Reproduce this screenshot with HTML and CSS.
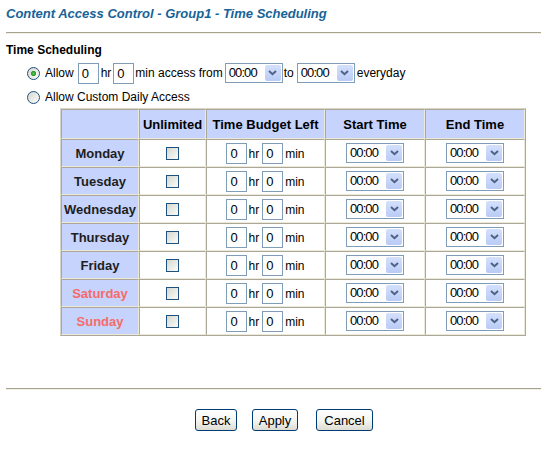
FILE: index.html
```html
<!DOCTYPE html>
<html>
<head>
<meta charset="utf-8">
<title>Time Scheduling</title>
<link rel="stylesheet" href="styles.css">
</head>
<body>
<div class="page">
  <h1 class="title">Content Access Control - Group1 - Time Scheduling</h1>
  <div class="rule"></div>
  <div class="section">Time Scheduling</div>

  <div class="opt opt1">
    <input type="radio" class="radio" name="mode" checked>
    <span class="t-allow">Allow</span>
    <input class="num n1" value="0"><span class="u-hr">hr</span><input class="num n2" value="0"><span class="t-from">min access from</span>
    <span class="sel s1"><span class="val">00:00</span><span class="arr"><svg width="9" height="6" viewBox="0 0 9 6"><path d="M1 1 L4.5 4.3 L8 1" fill="none" stroke="#4d6185" stroke-width="1.9"/></svg></span></span>
    <span class="t-to">to</span>
    <span class="sel s2"><span class="val">00:00</span><span class="arr"><svg width="9" height="6" viewBox="0 0 9 6"><path d="M1 1 L4.5 4.3 L8 1" fill="none" stroke="#4d6185" stroke-width="1.9"/></svg></span></span>
    <span class="t-every">everyday</span>
  </div>

  <div class="opt opt2">
    <input type="radio" class="radio" name="mode">
    <span class="t-allow">Allow Custom Daily Access</span>
  </div>

  <table class="grid">
    <thead>
      <tr class="head">
        <th class="c1"></th>
        <th class="c2">Unlimited</th>
        <th class="c3">Time Budget Left</th>
        <th class="c4">Start Time</th>
        <th class="c5">End Time</th>
      </tr>
    </thead>
    <tbody>
      <tr><th class="day">Monday</th><td><input type="checkbox" class="chk"></td><td><span class="budget"><input class="num" value="0"><span class="b-hr">hr</span><input class="num" value="0"><span class="b-min">min</span></span></td><td><span class="sel"><span class="val">00:00</span><span class="arr"><svg width="9" height="6" viewBox="0 0 9 6"><path d="M1 1 L4.5 4.3 L8 1" fill="none" stroke="#4d6185" stroke-width="1.9"/></svg></span></span></td><td><span class="sel"><span class="val">00:00</span><span class="arr"><svg width="9" height="6" viewBox="0 0 9 6"><path d="M1 1 L4.5 4.3 L8 1" fill="none" stroke="#4d6185" stroke-width="1.9"/></svg></span></span></td></tr>
      <tr><th class="day">Tuesday</th><td><input type="checkbox" class="chk"></td><td><span class="budget"><input class="num" value="0"><span class="b-hr">hr</span><input class="num" value="0"><span class="b-min">min</span></span></td><td><span class="sel"><span class="val">00:00</span><span class="arr"><svg width="9" height="6" viewBox="0 0 9 6"><path d="M1 1 L4.5 4.3 L8 1" fill="none" stroke="#4d6185" stroke-width="1.9"/></svg></span></span></td><td><span class="sel"><span class="val">00:00</span><span class="arr"><svg width="9" height="6" viewBox="0 0 9 6"><path d="M1 1 L4.5 4.3 L8 1" fill="none" stroke="#4d6185" stroke-width="1.9"/></svg></span></span></td></tr>
      <tr><th class="day">Wednesday</th><td><input type="checkbox" class="chk"></td><td><span class="budget"><input class="num" value="0"><span class="b-hr">hr</span><input class="num" value="0"><span class="b-min">min</span></span></td><td><span class="sel"><span class="val">00:00</span><span class="arr"><svg width="9" height="6" viewBox="0 0 9 6"><path d="M1 1 L4.5 4.3 L8 1" fill="none" stroke="#4d6185" stroke-width="1.9"/></svg></span></span></td><td><span class="sel"><span class="val">00:00</span><span class="arr"><svg width="9" height="6" viewBox="0 0 9 6"><path d="M1 1 L4.5 4.3 L8 1" fill="none" stroke="#4d6185" stroke-width="1.9"/></svg></span></span></td></tr>
      <tr><th class="day">Thursday</th><td><input type="checkbox" class="chk"></td><td><span class="budget"><input class="num" value="0"><span class="b-hr">hr</span><input class="num" value="0"><span class="b-min">min</span></span></td><td><span class="sel"><span class="val">00:00</span><span class="arr"><svg width="9" height="6" viewBox="0 0 9 6"><path d="M1 1 L4.5 4.3 L8 1" fill="none" stroke="#4d6185" stroke-width="1.9"/></svg></span></span></td><td><span class="sel"><span class="val">00:00</span><span class="arr"><svg width="9" height="6" viewBox="0 0 9 6"><path d="M1 1 L4.5 4.3 L8 1" fill="none" stroke="#4d6185" stroke-width="1.9"/></svg></span></span></td></tr>
      <tr><th class="day">Friday</th><td><input type="checkbox" class="chk"></td><td><span class="budget"><input class="num" value="0"><span class="b-hr">hr</span><input class="num" value="0"><span class="b-min">min</span></span></td><td><span class="sel"><span class="val">00:00</span><span class="arr"><svg width="9" height="6" viewBox="0 0 9 6"><path d="M1 1 L4.5 4.3 L8 1" fill="none" stroke="#4d6185" stroke-width="1.9"/></svg></span></span></td><td><span class="sel"><span class="val">00:00</span><span class="arr"><svg width="9" height="6" viewBox="0 0 9 6"><path d="M1 1 L4.5 4.3 L8 1" fill="none" stroke="#4d6185" stroke-width="1.9"/></svg></span></span></td></tr>
      <tr><th class="day weekend">Saturday</th><td><input type="checkbox" class="chk"></td><td><span class="budget"><input class="num" value="0"><span class="b-hr">hr</span><input class="num" value="0"><span class="b-min">min</span></span></td><td><span class="sel"><span class="val">00:00</span><span class="arr"><svg width="9" height="6" viewBox="0 0 9 6"><path d="M1 1 L4.5 4.3 L8 1" fill="none" stroke="#4d6185" stroke-width="1.9"/></svg></span></span></td><td><span class="sel"><span class="val">00:00</span><span class="arr"><svg width="9" height="6" viewBox="0 0 9 6"><path d="M1 1 L4.5 4.3 L8 1" fill="none" stroke="#4d6185" stroke-width="1.9"/></svg></span></span></td></tr>
      <tr><th class="day weekend">Sunday</th><td><input type="checkbox" class="chk"></td><td><span class="budget"><input class="num" value="0"><span class="b-hr">hr</span><input class="num" value="0"><span class="b-min">min</span></span></td><td><span class="sel"><span class="val">00:00</span><span class="arr"><svg width="9" height="6" viewBox="0 0 9 6"><path d="M1 1 L4.5 4.3 L8 1" fill="none" stroke="#4d6185" stroke-width="1.9"/></svg></span></span></td><td><span class="sel"><span class="val">00:00</span><span class="arr"><svg width="9" height="6" viewBox="0 0 9 6"><path d="M1 1 L4.5 4.3 L8 1" fill="none" stroke="#4d6185" stroke-width="1.9"/></svg></span></span></td></tr>
    </tbody>
  </table>

  <div class="rule rule-bottom"></div>

  <div class="actions">
    <button class="btn b-back">Back</button>
    <button class="btn b-apply">Apply</button>
    <button class="btn b-cancel">Cancel</button>
  </div>
</div>
</body>
</html>
```

FILE: styles.css
```css
* { box-sizing: border-box; }
html, body { margin: 0; padding: 0; background: #fff; }
body {
  width: 541px;
  font-family: "Liberation Sans", Arial, sans-serif;
  font-size: 12px;
  color: #000;
}
.page { padding-left: 6px; }

.title {
  margin: 0;
  padding-top: 4px;
  font-size: 13px;
  font-weight: bold;
  font-style: italic;
  line-height: 20px;
  color: #176397;
}
.rule {
  margin-top: 8px;
  height: 2px;
  border-top: 1px solid #a7a393;
  border-bottom: 1px solid #f1efe2;
}
.section {
  margin-top: 8px;
  font-weight: bold;
  line-height: 16px;
}

.opt {
  display: flex;
  align-items: center;
  height: 22px;
  padding-left: 21px;
  white-space: nowrap;
}
.opt1 { margin-top: 4px; }
.opt2 { margin-top: 2px; }

.radio {
  appearance: none;
  -webkit-appearance: none;
  margin: 0 5px 0 0;
  width: 13px;
  height: 13px;
  border: 1px solid #1c5180;
  border-radius: 50%;
  background: linear-gradient(135deg, #d6d6ce, #fdfdfb);
}
.radio:checked {
  background:
    radial-gradient(circle, #52c652 0, #2c9e2c 2.2px, rgba(44,158,44,0) 3px),
    linear-gradient(135deg, #d6d6ce, #fdfdfb);
}

.num {
  width: 21px;
  height: 21px;
  margin: 0;
  border: 1px solid #7f9db9;
  padding: 0 0 0 3px;
  font-family: "Liberation Sans", Arial, sans-serif;
  font-size: 13px;
  color: #000;
  background: #fff;
  outline: none;
}
.n1 { margin-left: 4px; }
.u-hr { margin-left: 2px; margin-right: 2px; }
.t-from { margin-left: 1px; margin-right: 2px; }
.t-to { margin-left: 1px; margin-right: 3px; }
.t-every { margin-left: 2px; }

.sel {
  display: inline-flex;
  align-items: center;
  justify-content: space-between;
  width: 58px;
  height: 20px;
  border: 1px solid #7f9db9;
  padding: 1px 1px 1px 3px;
  background: #fff;
  font-size: 13px;
  letter-spacing: -0.9px;
  line-height: 16px;
}
.arr {
  display: flex;
  align-items: center;
  justify-content: center;
  width: 16px;
  height: 16px;
  border-radius: 2px;
  background: linear-gradient(#d4e0fc, #b9cbf6);
  letter-spacing: 0;
}

.grid {
  margin-left: 54px;
  width: 466px;
  table-layout: fixed;
  border-collapse: separate;
  border-spacing: 0;
  border: 1px solid;
  border-color: #d8d5c8 #aca899 #aca899 #d8d5c8;
}
.grid th, .grid td {
  padding: 0;
  text-align: center;
  vertical-align: middle;
  border: 1px solid;
  border-color: #aca899 #ece9d8 #ece9d8 #aca899;
}
.head { height: 30px; }
.grid tbody tr { height: 28px; }
.grid thead th {
  background: #c6d3fc;
  font-size: 13px;
  font-weight: bold;
}
.c1 { width: 78px; }
.c2 { width: 67px; }
.c3 { width: 119px; }
.c4 { width: 100px; }
.c5 { width: 100px; }
.day {
  background: #c6d3fc;
  font-size: 13px;
  font-weight: bold;
  color: #1e1e1e;
}
.day.weekend { color: #f56b6b; }

.chk {
  appearance: none;
  -webkit-appearance: none;
  display: inline-block;
  vertical-align: middle;
  margin: 0;
  width: 13px;
  height: 13px;
  border: 1px solid #1c5180;
  background: linear-gradient(135deg, #d8d8d0, #fbfbf9);
}

.budget {
  display: inline-flex;
  align-items: baseline;
  vertical-align: middle;
}
.b-hr { margin-left: 1px; margin-right: 3px; }
.b-min { margin-left: 2px; }

.rule-bottom { margin-top: 52px; }

.actions {
  display: flex;
  margin-top: 19px;
  padding-left: 189px;
}
.btn {
  height: 22px;
  margin: 0;
  padding: 0;
  border: 1px solid #003c74;
  border-radius: 3px;
  background: linear-gradient(#ffffff, #f4f4f0 55%, #dedcd2);
  font-family: "Liberation Sans", Arial, sans-serif;
  font-size: 13px;
  color: #000;
}
.b-back { width: 42px; }
.b-apply { width: 46px; margin-left: 15px; }
.b-cancel { width: 57px; margin-left: 18px; }
```
